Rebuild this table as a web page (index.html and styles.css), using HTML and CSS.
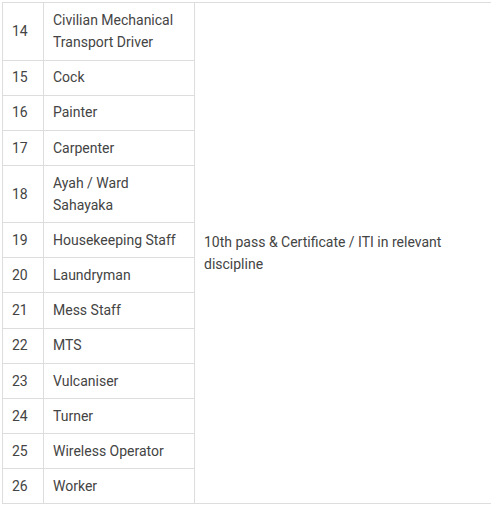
FILE: index.html
```html
<!DOCTYPE html>
<html>
<head>
<meta charset="utf-8">
<link rel="stylesheet" href="styles.css">
</head>
<body>
<table class="posts">
  <colgroup>
    <col class="c-no">
    <col class="c-post">
    <col class="c-qual">
  </colgroup>
  <tbody>
    <tr><td>14</td><td>Civilian Mechanical Transport Driver</td><td rowspan="13">10th pass &amp; Certificate / ITI in relevant discipline</td></tr>
    <tr><td>15</td><td>Cock</td></tr>
    <tr><td>16</td><td>Painter</td></tr>
    <tr><td>17</td><td>Carpenter</td></tr>
    <tr><td>18</td><td>Ayah / Ward Sahayaka</td></tr>
    <tr><td>19</td><td>Housekeeping Staff</td></tr>
    <tr><td>20</td><td>Laundryman</td></tr>
    <tr><td>21</td><td>Mess Staff</td></tr>
    <tr><td>22</td><td>MTS</td></tr>
    <tr><td>23</td><td>Vulcaniser</td></tr>
    <tr><td>24</td><td>Turner</td></tr>
    <tr><td>25</td><td>Wireless Operator</td></tr>
    <tr><td>26</td><td>Worker</td></tr>
  </tbody>
</table>
</body>
</html>
```
FILE: styles.css
```css
html, body {
  margin: 0;
  background: #fff;
}
body {
  padding: 2px 0 0 2px;
  font-family: Roboto, "Liberation Sans", sans-serif;
  font-size: 14px;
  color: #444;
}
.posts {
  border-collapse: collapse;
  table-layout: fixed;
  width: 489px;
}
.c-no { width: 41px; }
.c-post { width: 151px; }
.c-qual { width: 297px; }
.posts td {
  border: 1px solid #dddddd;
  padding: 5.85px 9px;
  line-height: 22.4px;
  vertical-align: middle;
  text-align: left;
}
```
